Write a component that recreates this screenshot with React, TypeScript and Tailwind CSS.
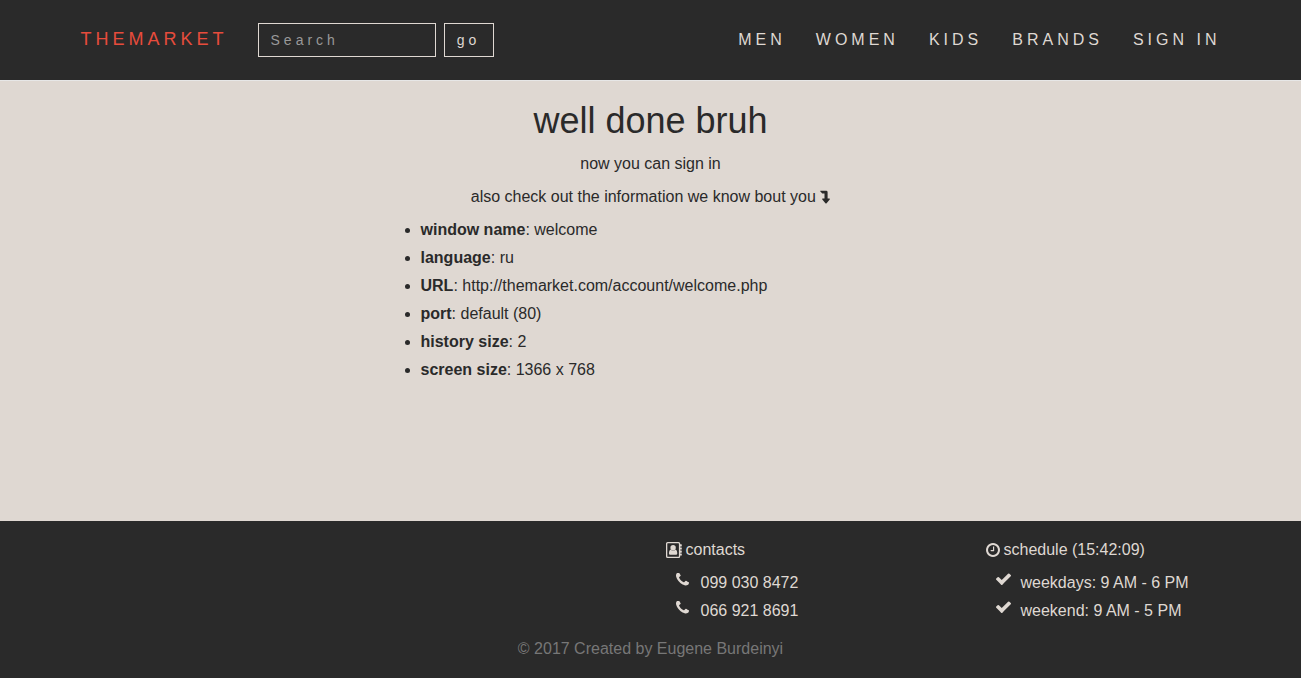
import type { ReactNode } from 'react';

const links = ['MEN', 'WOMEN', 'KIDS', 'BRANDS', 'SIGN IN'];

const facts = [
  ['window name', 'welcome'],
  ['language', 'ru'],
  ['URL', 'http://themarket.com/account/welcome.php'],
  ['port', 'default (80)'],
  ['history size', '2'],
  ['screen size', '1366 x 768'],
];

function LevelDownIcon() {
  return (
    <svg viewBox="0 0 10 14" className="inline-block h-[14px] w-[10px] align-[-2px]" fill="currentColor" aria-hidden="true">
      <path d="M0.4 0.8H6.2Q7.6 0.8 7.6 2.2V8.6H9.4Q10.2 8.7 9.7 9.5L6.6 13.2Q6 13.8 5.4 13.2L2.3 9.5Q1.8 8.7 2.6 8.6H4.5V3.6H2.6Q2.2 3.6 2 3.3L0.2 1.3Q0 0.9 0.4 0.8Z" />
    </svg>
  );
}

function AddressBookIcon() {
  return (
    <svg viewBox="0 0 16 16" className="h-4 w-4" fill="currentColor" aria-hidden="true">
      <path fillRule="evenodd" d="M1.6 0H12.6Q14.2 0 14.2 1.6V2.3H15.4Q15.8 2.3 15.8 2.7V4.1Q15.8 4.5 15.4 4.5H14.2V5.4H15.4Q15.8 5.4 15.8 5.8V7.2Q15.8 7.6 15.4 7.6H14.2V8.5H15.4Q15.8 8.5 15.8 8.9V10.3Q15.8 10.7 15.4 10.7H14.2V11.6H15.4Q15.8 11.6 15.8 12V13.2Q15.8 13.6 15.4 13.6H14.2V14.4Q14.2 16 12.6 16H1.6Q0 16 0 14.4V1.6Q0 0 1.6 0ZM1.7 1.3Q1.3 1.3 1.3 1.7V14.3Q1.3 14.7 1.7 14.7H12.5Q12.9 14.7 12.9 14.3V1.7Q12.9 1.3 12.5 1.3Z" />
      <circle cx="7.1" cy="5.8" r="2.7" />
      <path d="M4.7 7.4Q7.1 9.8 9.5 7.4Q11.3 8 11.3 11.2Q11.3 12.8 10 12.8H4.2Q2.9 12.8 2.9 11.2Q2.9 8 4.7 7.4Z" />
    </svg>
  );
}

function ClockIcon() {
  return (
    <svg viewBox="128 128 1536 1536" className="h-[14px] w-[14px]" fill="currentColor" aria-hidden="true">
      <path d="M1024 544v448q0 14-9 23t-23 9h-320q-14 0-23-9t-9-23v-64q0-14 9-23t23-9h224v-352q0-14 9-23t23-9h64q14 0 23 9t9 23zm416 352q0-148-73-273t-198-198-273-73-273 73-198 198-73 273 73 273 198 198 273 73 273-73 198-198 73-273zm224 0q0 209-103 385.5t-279.5 279.5-385.5 103-385.5-103-279.5-279.5-103-385.5 103-385.5 279.5-279.5 385.5-103 385.5 103 279.5 279.5 103 385.5z" />
    </svg>
  );
}

function PhoneIcon() {
  return (
    <svg viewBox="192 192 1408 1408" className="h-[13px] w-[13px]" fill="currentColor" aria-hidden="true">
      <path d="M1600 1240q0 27-10 70.5t-21 68.5q-21 50-122 106-94 51-186 51-27 0-53-3.5t-57.5-12.5-47-14.5-55.5-20.5-49-18q-98-35-175-83-127-79-264-216t-216-264q-48-77-83-175-3-9-18-49t-20.5-55.5-14.5-47-12.5-57.5-3.5-53q0-92 51-186 56-101 106-122 25-11 68.5-21t70.5-10q14 0 21 3 18 6 53 76 11 19 30 54t35 63.5 31 53.5q3 4 17.5 25t21.5 35.5 7 28.5q0 20-28.5 50t-62 55-62 53-28.5 46q0 9 5 22.5t8.5 20.5 14 24 11.5 19q76 137 174 235t235 174q2 1 19 11.5t24 14 20.5 8.5 22.5 5q18 0 46-28.5t53-62 55-62 50-28.5q14 0 28.5 7t35.5 21.5 25 17.5q25 15 53.5 31t63.5 35 54 30q70 35 76 53 3 7 3 21z" />
    </svg>
  );
}

function CheckIcon() {
  return (
    <svg viewBox="121 302 1550 1220" className="h-[12px] w-[15px]" fill="currentColor" aria-hidden="true">
      <path d="M1671 566q0 40-28 68l-724 724-136 136q-28 28-68 28t-68-28l-136-136-362-362q-28-28-28-68t28-68l136-136q28-28 68-28t68 28l294 295 656-657q28-28 68-28t68 28l136 136q28 28 28 68z" />
    </svg>
  );
}

function FooterColumn({ icon, title, itemIcon, items }: { icon: ReactNode; title: string; itemIcon: ReactNode; items: string[] }) {
  return (
    <section className="px-[15px]">
      <h2 className="mb-[10px] flex items-center gap-1">
        {icon}
        {title}
      </h2>
      <ul className="flex flex-col gap-[5px] pl-[10px]">
        {items.map((item) => (
          <li key={item} className="flex gap-[10px]">
            <span className="flex h-4 w-[15px] items-center">{itemIcon}</span>
            {item}
          </li>
        ))}
      </ul>
    </section>
  );
}

export default function App() {
  return (
    <div className="flex min-h-screen flex-col bg-[#dfd8d2] font-['Liberation_Sans',Arial,sans-serif] text-base leading-[23px] text-[#2a2a2a]">
      <header className="border-b border-[#e7e7e7] bg-[#2a2a2a] text-[#dfd8d2]">
        <div className="mx-auto flex h-20 max-w-[1170px] items-center justify-between px-[15px]">
          <div className="flex items-center">
            <a href="#" className="mr-[30px] pb-0.5 text-lg tracking-[4px] text-[#e74c3c]">THEMARKET</a>
            <form className="flex gap-2 text-sm" onSubmit={(event) => event.preventDefault()}>
              <input
                type="search"
                aria-label="Search"
                placeholder="Search"
                className="h-[34px] w-[178px] border border-[#dfd8d2] bg-transparent px-3 tracking-[4px] outline-none placeholder:text-[#999]"
              />
              <button type="submit" className="h-[34px] w-[50px] border border-[#dfd8d2] tracking-[4px]">go</button>
            </form>
          </div>
          <nav className="flex gap-[30px] pb-0.5 tracking-[4px]">
            {links.map((link) => (
              <a key={link} href="#">{link}</a>
            ))}
          </nav>
        </div>
      </header>

      <main className="flex flex-1 flex-col items-center pt-5">
        <h1 className="mb-[11px] text-4xl leading-10">well done bruh</h1>
        <p className="mb-[10px]">now you can sign in</p>
        <p className="mb-[10px]">
          also check out the information we know bout you <LevelDownIcon />
        </p>
        <ul className="flex w-full max-w-[500px] list-disc flex-col gap-[5px] pl-5">
          {facts.map(([name, value]) => (
            <li key={name}>
              <b>{name}</b>: {value}
            </li>
          ))}
        </ul>
      </main>

      <footer className="bg-[#2a2a2a] pt-[17px] pb-[18px] text-[#dfd8d2]">
        <div className="mx-auto grid max-w-[1280px] grid-cols-2">
          <div className="col-start-2 grid grid-cols-2">
            <FooterColumn
              icon={<AddressBookIcon />}
              title="contacts"
              itemIcon={<PhoneIcon />}
              items={['099 030 8472', '066 921 8691']}
            />
            <FooterColumn
              icon={<ClockIcon />}
              title="schedule (15:42:09)"
              itemIcon={<CheckIcon />}
              items={['weekdays: 9 AM - 6 PM', 'weekend: 9 AM - 5 PM']}
            />
          </div>
        </div>
        <p className="mt-[15px] text-center text-[#777]">© 2017 Created by Eugene Burdeinyi</p>
      </footer>
    </div>
  );
}
